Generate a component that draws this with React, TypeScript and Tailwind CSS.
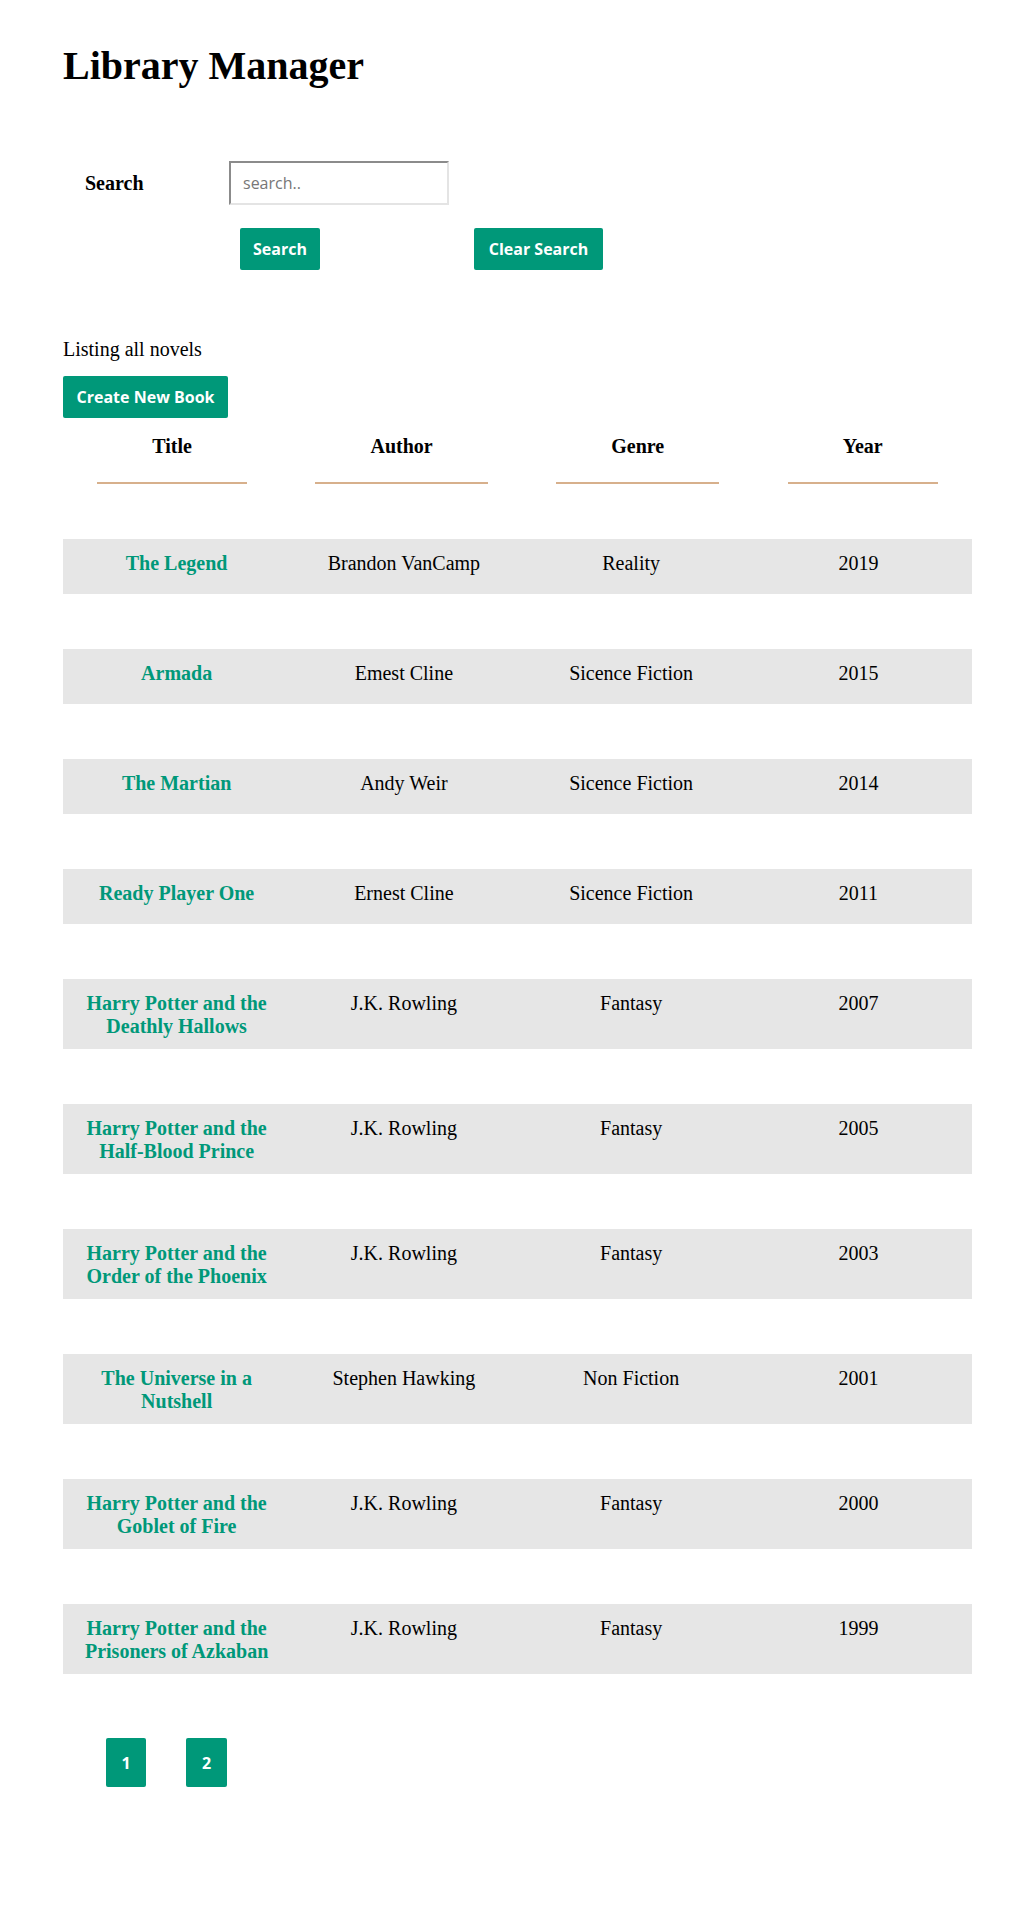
import React from "react";

const books = [
  ["The Legend", "Brandon VanCamp", "Reality", "2019"],
  ["Armada", "Emest Cline", "Sicence Fiction", "2015"],
  ["The Martian", "Andy Weir", "Sicence Fiction", "2014"],
  ["Ready Player One", "Ernest Cline", "Sicence Fiction", "2011"],
  ["Harry Potter and the Deathly Hallows", "J.K. Rowling", "Fantasy", "2007"],
  ["Harry Potter and the Half-Blood Prince", "J.K. Rowling", "Fantasy", "2005"],
  ["Harry Potter and the Order of the Phoenix", "J.K. Rowling", "Fantasy", "2003"],
  ["The Universe in a Nutshell", "Stephen Hawking", "Non Fiction", "2001"],
  ["Harry Potter and the Goblet of Fire", "J.K. Rowling", "Fantasy", "2000"],
  ["Harry Potter and the Prisoners of Azkaban", "J.K. Rowling", "Fantasy", "1999"],
];

const btn =
  "h-[42px] rounded-[2px] bg-[#009879] text-white font-bold text-[16px] font-['Open_Sans',sans-serif] flex items-center justify-center";

export default function App() {
  return (
    <div className="min-h-[1905px] bg-white text-black font-['Liberation_Serif',serif] px-[63px] pt-[43px] pb-[40px]">
      <h1 className="text-[40px] leading-[46px] font-bold">Library Manager</h1>

      <div className="mt-[72px] pl-[22px] flex items-center">
        <label className="w-[144px] text-[20px] leading-[23px] font-bold">Search</label>
        <input
          type="text"
          placeholder="search.."
          className="w-[220px] h-[44px] border-2 border-t-[#8b8b8b] border-l-[#8b8b8b] border-b-[#e4e4e4] border-r-[#e4e4e4] pl-[12px] text-[16px] font-['Open_Sans',sans-serif] placeholder:text-[#777777] outline-none"
        />
      </div>

      <div className="mt-[23px] ml-[177px] flex">
        <button className={`${btn} w-[80px]`}>Search</button>
        <button className={`${btn} w-[129px] ml-[154px]`}>Clear Search</button>
      </div>

      <p className="mt-[68px] text-[20px] leading-[23px]">Listing all novels</p>

      <button className={`${btn} w-[165px] mt-[15px]`}>Create New Book</button>

      <div className="mt-[17px] flex justify-around">
        {["Title", "Author", "Genre", "Year"].map((h) => (
          <div
            key={h}
            className="px-[55px] pb-[24px] border-b-2 border-[#d7b08c] text-[20px] leading-[23px] font-bold text-center"
          >
            {h}
          </div>
        ))}
      </div>

      <div className="mt-[55px] flex flex-col gap-[55px]">
        {books.map((b) => (
          <div key={b[0]} className="grid grid-cols-4 bg-[#e6e6e6] min-h-[55px] pt-[13px] pb-[11px] text-[20px] leading-[23px] text-center">
            <a className="px-[12px] font-bold text-[#009879]">{b[0]}</a>
            <div className="px-[12px]">{b[1]}</div>
            <div className="px-[12px]">{b[2]}</div>
            <div className="px-[12px]">{b[3]}</div>
          </div>
        ))}
      </div>

      <div className="mt-[64px] ml-[43px] flex gap-[40px]">
        <button className={`${btn} w-[40px] h-[49px]`}>1</button>
        <button className={`${btn} w-[41px] h-[49px]`}>2</button>
      </div>
    </div>
  );
}
